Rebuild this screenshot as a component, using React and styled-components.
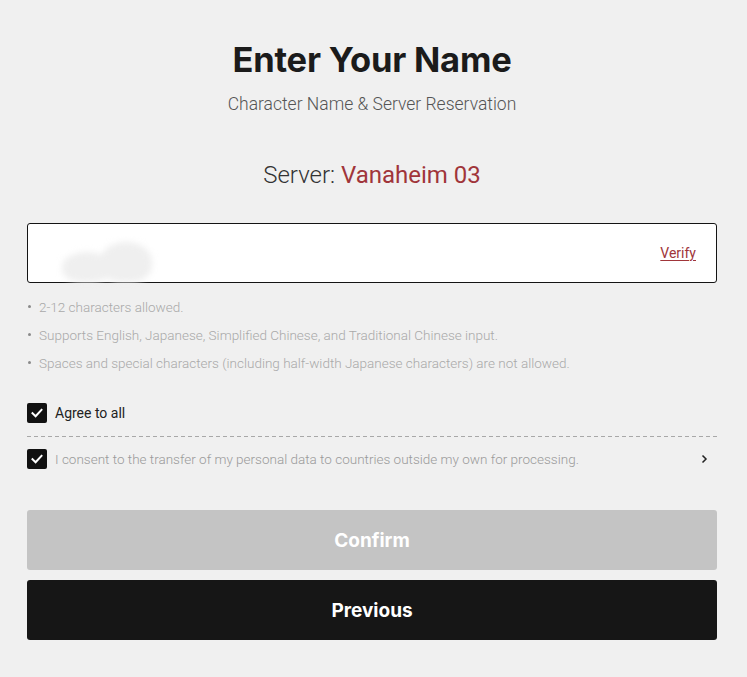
import styled, { createGlobalStyle } from "styled-components";

const GlobalStyle = createGlobalStyle`
  html, body {
    margin: 0;
    padding: 0;
    background: #f0f0f0;
  }
  body {
    font-family: Roboto, "Noto Sans", sans-serif;
    color: #1a1a1a;
  }
`;

const Page = styled.div`
  width: 747px;
  height: 677px;
  box-sizing: border-box;
  padding: 39px 30px 0 27px;
  background: #f0f0f0;
`;

const Header = styled.div`
  display: flex;
  flex-direction: column;
  align-items: center;
`;

const Title = styled.h1`
  margin: 0;
  font-family: Inter, sans-serif;
  font-size: 34.5px;
  font-weight: 700;
  line-height: 42px;
  color: #1b1b1b;
  letter-spacing: -0.2px;
`;

const Subtitle = styled.p`
  margin: 13px 0 0;
  font-size: 17.5px;
  font-weight: 300;
  color: #555;
  line-height: 20px;
`;

const Server = styled.p`
  margin: 46px 0 0;
  font-size: 24px;
  font-weight: 300;
  color: #333;
  line-height: 30px;

  span {
    font-weight: 400;
    color: #a0353a;
  }
`;

const InputBox = styled.div`
  margin-top: 33px;
  height: 60px;
  box-sizing: border-box;
  border: 1px solid #141414;
  border-radius: 3px;
  background: #fff;
  display: flex;
  align-items: flex-end;
  justify-content: space-between;
  padding: 0 20px 0 34px;
`;

const Smudge = styled.span`
  display: flex;
  align-items: flex-end;
  height: 44px;
  filter: blur(3px);
`;

const Lump = styled.span`
  display: block;
  width: ${(p) => p.$w}px;
  height: ${(p) => p.$h}px;
  margin-left: ${(p) => p.$ml || 0}px;
  border-radius: 50% 50% 40% 40%;
  background: #efefef;
`;

const Verify = styled.a`
  align-self: center;
  font-size: 14px;
  color: #a0353a;
  text-decoration: underline;
  text-underline-offset: 2px;
  cursor: pointer;
`;

const Rules = styled.ul`
  list-style: none;
  margin: 16px 0 0;
  padding: 0;
  display: flex;
  flex-direction: column;
  gap: 12px;
`;

const Rule = styled.li`
  position: relative;
  padding-left: 12px;
  font-size: 13.5px;
  font-weight: 300;
  color: #a9a9a9;
  line-height: 16px;

  &::before {
    content: "";
    position: absolute;
    left: 1px;
    top: 6px;
    width: 3px;
    height: 3px;
    border-radius: 50%;
    background: #8a8a8a;
  }
`;

const AgreeRow = styled.label`
  display: flex;
  align-items: center;
  gap: 8px;
  height: 20px;
  margin-top: ${(p) => p.$mt || 0}px;
  font-size: ${(p) => (p.$muted ? 13.5 : 14)}px;
  font-weight: ${(p) => (p.$muted ? 300 : 400)};
  color: ${(p) => (p.$muted ? "#9a9a9a" : "#222")};
`;

const Box = styled.span`
  width: 20px;
  height: 20px;
  flex: 0 0 20px;
  border-radius: 2px;
  background: #111;
  display: flex;
  align-items: center;
  justify-content: center;
`;

const Grow = styled.span`
  flex: 1;
`;

const Chevron = styled.span`
  display: flex;
  margin-right: 9px;
`;

const Divider = styled.div`
  margin-top: 13px;
  height: 1px;
  background: repeating-linear-gradient(to right, #a8a8a8 0 4px, transparent 4px 7px);
`;

const Buttons = styled.div`
  margin-top: 41px;
  display: flex;
  flex-direction: column;
  gap: 10px;
`;

const Button = styled.button`
  height: 60px;
  border: none;
  border-radius: 3px;
  font-family: Inter, sans-serif;
  font-size: 19px;
  font-weight: 700;
  color: #fff;
  background: ${(p) => (p.$dark ? "#161616" : "#c4c4c4")};
  cursor: pointer;
`;

const Check = () => (
  <svg width="14" height="14" viewBox="0 0 14 14">
    <path d="M2.5 7.2 L5.6 10.2 L11.5 3.8" fill="none" stroke="#fff" strokeWidth="2" strokeLinecap="square" />
  </svg>
);

export default function App() {
  return (
    <Page>
      <GlobalStyle />
      <Header>
        <Title>Enter Your Name</Title>
        <Subtitle>Character Name &amp; Server Reservation</Subtitle>
        <Server>
          Server: <span>Vanaheim 03</span>
        </Server>
      </Header>
      <InputBox>
        <Smudge>
          <Lump $w={50} $h={30} />
          <Lump $w={52} $h={40} $ml={-12} />
        </Smudge>
        <Verify>Verify</Verify>
      </InputBox>
      <Rules>
        <Rule>2-12 characters allowed.</Rule>
        <Rule>Supports English, Japanese, Simplified Chinese, and Traditional Chinese input.</Rule>
        <Rule>Spaces and special characters (including half-width Japanese characters) are not allowed.</Rule>
      </Rules>
      <AgreeRow $mt={32}>
        <Box><Check /></Box>
        Agree to all
      </AgreeRow>
      <Divider />
      <AgreeRow $mt={12} $muted>
        <Box><Check /></Box>
        <Grow>I consent to the transfer of my personal data to countries outside my own for processing.</Grow>
        <Chevron>
          <svg width="7" height="10" viewBox="0 0 7 10">
            <path d="M1.5 1.5 L5 5 L1.5 8.5" fill="none" stroke="#222" strokeWidth="1.5" />
          </svg>
        </Chevron>
      </AgreeRow>
      <Buttons>
        <Button>Confirm</Button>
        <Button $dark>Previous</Button>
      </Buttons>
    </Page>
  );
}
